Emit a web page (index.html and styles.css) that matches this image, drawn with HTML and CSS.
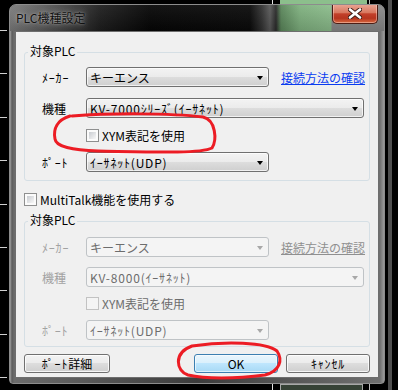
FILE: index.html
```html
<!DOCTYPE html>
<html lang="ja">
  <head>
    <meta charset="UTF-8" />
    <title>PLC機種設定</title>
    <link rel="stylesheet" href="styles.css">
  </head>
  <body>
    <div class="desk">
      <div class="ticks"></div>
      <div class="bgwin">
        <div class="bgpane"></div>
        <div class="bgfoot"></div>
      </div>
      <div class="rbar"></div>

      <div class="window">
        <div class="titlebar">
          <span class="title">PLC機種設定</span>
          <span class="close">
            <svg width="14" height="11" viewBox="0 0 14 11">
              <path d="M2 1.5 L12 9.5 M12 1.5 L2 9.5" stroke="#3a1a14" stroke-width="4.4" stroke-linecap="round" />
              <path d="M2 1.5 L12 9.5 M12 1.5 L2 9.5" stroke="#fff" stroke-width="2.6" stroke-linecap="round" />
            </svg>
          </span>
        </div>

        <div class="client">
          <div class="group">
            <span class="legend">対象PLC</span>
            <div class="row">
              <span class="lbl hw">ﾒｰｶｰ</span>
              <div class="combo short">キーエンス<i class="arrow"></i></div>
              <a class="link">接続方法の確認</a>
            </div>
            <div class="row gap">
              <span class="lbl">機種</span>
              <div class="combo long"><span class="hw">KV-7000ｼﾘｰｽﾞ(ｲｰｻﾈｯﾄ)</span><i class="arrow"></i></div>
            </div>
            <label class="check indent gap"><span class="box"></span>XYM表記を使用</label>
            <div class="row gap-s">
              <span class="lbl hw">ﾎﾟｰﾄ</span>
              <div class="combo short"><span class="hw">ｲｰｻﾈｯﾄ(UDP)</span><i class="arrow"></i></div>
            </div>
          </div>

          <label class="check multi"><span class="box"></span>MultiTalk機能を使用する</label>

          <div class="group second disabled">
            <span class="legend">対象PLC</span>
            <div class="row">
              <span class="lbl hw">ﾒｰｶｰ</span>
              <div class="combo short">キーエンス<i class="arrow"></i></div>
              <a class="link">接続方法の確認</a>
            </div>
            <div class="row gap-s">
              <span class="lbl">機種</span>
              <div class="combo long"><span class="hw">KV-8000(ｲｰｻﾈｯﾄ)</span><i class="arrow"></i></div>
            </div>
            <label class="check indent gap-s"><span class="box"></span>XYM表記を使用</label>
            <div class="row gap-s">
              <span class="lbl hw">ﾎﾟｰﾄ</span>
              <div class="combo short"><span class="hw">ｲｰｻﾈｯﾄ(UDP)</span><i class="arrow"></i></div>
            </div>
          </div>

          <div class="buttons">
            <button class="btn wide"><span class="hw">ﾎﾟｰﾄ</span>詳細</button>
            <span class="spacer"></span>
            <button class="btn default">OK</button>
            <button class="btn"><span class="hw">ｷｬﾝｾﾙ</span></button>
          </div>
        </div>
      </div>

      <!-- red marks drawn on the screenshot -->
      <svg class="marks" width="398" height="390" viewBox="0 0 398 390">
        <path d="M72 116 C110 113 170 113 203 117 C216 120 217 140 212 148 C200 154 150 152 98 151 C72 150 56 147 55 139 C53 129 57 120 70 116"
              fill="none" stroke="#ec1c24" stroke-width="3" stroke-linecap="round" />
        <path d="M192 346 C225 341 266 342 277 351 C283 360 280 371 265 375 C235 379 205 379 188 375 C176 371 173 353 192 346"
              fill="none" stroke="#ec1c24" stroke-width="3" stroke-linecap="round" />
      </svg>
    </div>
  </body>
</html>
```

FILE: styles.css
```css
* {
  box-sizing: border-box;
}
body {
  margin: 0;
  background: #000;
  font-family: "Noto Sans CJK JP", "Noto Sans", sans-serif;
  font-size: 12px;
  color: #000;
}
.desk {
  position: relative;
  width: 398px;
  height: 390px;
  overflow: hidden;
  background: #000;
}
/* half-width kana is narrow in Noto, widen it a little */
.hw {
  letter-spacing: 0.8px;
}

/* things behind the dialog */
.ticks {
  position: absolute;
  left: 0;
  top: 0;
  width: 7px;
  height: 390px;
  background: repeating-linear-gradient(
    to bottom,
    transparent 0,
    transparent 30px,
    #d0d0d0 30px,
    #d0d0d0 31px,
    transparent 31px,
    transparent 43.4px
  );
}
.bgwin {
  position: absolute;
  left: 272px;
  top: 0;
  width: 98px;
  height: 390px;
  border-left: 1px solid #e4e4e4;
  border-right: 1px solid #bdbdbd;
}
.bgpane {
  position: absolute;
  left: 7px;
  top: 0;
  width: 87px;
  height: 30px;
  background: #8cbf8c;
}
.bgfoot {
  position: absolute;
  left: 7px;
  top: 384px;
  width: 83px;
  height: 10px;
  border: 1px solid #a8a8a8;
  background: #364236;
}
.rbar {
  position: absolute;
  left: 388px;
  top: 0;
  width: 4px;
  height: 390px;
  background: #4e4e4e;
}

/* dialog window */
.window {
  position: absolute;
  left: 9px;
  top: 4px;
  width: 376px;
  height: 380px;
  border: 1px solid #8c8c8c;
  border-radius: 7px 7px 4px 4px;
  background: linear-gradient(
    to right,
    #a0a0a0 0,
    #5c5c5c 2px,
    #6c6c6c 4px,
    #3c3c3c 50%,
    #707070 calc(100% - 4px),
    #9a9a9a 100%
  );
  overflow: hidden;
}
.titlebar {
  display: flex;
  align-items: flex-start;
  height: 26px;
  background: linear-gradient(to bottom, rgba(255, 255, 255, 0.06), rgba(0, 0, 0, 0.15)),
    linear-gradient(
      to right,
      #7c7c7c 0,
      #5e5e5e 30px,
      #1e1e1e 90px,
      #060606 140px,
      #0a0a0a 240px,
      #333 252px,
      #5a5a5a 260px,
      #2a2a2a 266px,
      #5b875b 271px,
      #7fb17f 290px,
      #8cbd8c 321px,
      #8a8a8a 322px
    );
}
.title {
  padding: 5px 0 0 6px;
  line-height: 16px;
  color: #111;
  text-shadow: 0 0 6px rgba(255, 255, 255, 0.55), 0 0 2px rgba(255, 255, 255, 0.4);
}
.close {
  display: flex;
  align-items: center;
  justify-content: center;
  margin: -1px 6px 0 auto;
  width: 46px;
  height: 20px;
  border: 1px solid #4c1d14;
  border-top: none;
  border-radius: 0 0 5px 5px;
  background: linear-gradient(#eaa797 0%, #d8785f 45%, #c2402a 52%, #b6351f 75%, #d8693f 100%);
  box-shadow: inset 0 0 0 1px rgba(255, 220, 210, 0.45);
}

.client {
  display: flex;
  flex-direction: column;
  height: 347px;
  margin: 0 5px;
  padding: 0 8px;
  border: 1px solid #6e6e6e;
  background: #f0f0f0;
}

/* group boxes */
.group {
  position: relative;
  display: flex;
  flex-direction: column;
  margin-top: 20px;
  padding: 14px 0 8px 17px;
  border: 1px solid #d5dfe5;
  border-radius: 3px;
}
.group.second {
  margin-top: 15px;
  padding: 15px 0 6px 17px;
}
.legend {
  position: absolute;
  top: -9px;
  left: 3px;
  padding: 0 2px;
  line-height: 14px;
  background: #f0f0f0;
}
.row {
  display: flex;
  align-items: center;
  height: 20px;
}
.gap {
  margin-top: 11px;
}
.gap-s {
  margin-top: 10px;
}
.lbl {
  width: 44px;
  white-space: nowrap;
}
.combo {
  display: flex;
  align-items: center;
  height: 20px;
  padding-left: 3px;
  border: 1px solid #707070;
  border-radius: 3px;
  background: linear-gradient(#f3f3f3 0%, #ebebeb 50%, #dddddd 50%, #cfcfcf 100%);
  box-shadow: inset 0 0 0 1px rgba(255, 255, 255, 0.7);
  white-space: nowrap;
}
.combo.short {
  width: 183px;
}
.combo.long {
  width: 278px;
}
.arrow {
  margin: 1px 5px 0 auto;
  border-left: 3.5px solid transparent;
  border-right: 3.5px solid transparent;
  border-top: 4px solid #000;
}
.link {
  margin-left: 12px;
  color: #0a3cf0;
  text-decoration: underline;
  white-space: nowrap;
}

/* check boxes */
.check {
  display: flex;
  align-items: center;
  gap: 3px;
  height: 13px;
  line-height: 13px;
  white-space: nowrap;
}
.check.indent {
  padding-left: 44px;
}
.check.multi {
  margin-top: 12px;
}
.box {
  width: 13px;
  height: 13px;
  padding: 2px;
  border: 1px solid #8e8f8f;
  background: linear-gradient(135deg, #c9ccd1, #f7f7f7) content-box, #fbfbfb;
}

/* disabled group */
.disabled .lbl {
  color: #a2a2a2;
}
.disabled .combo {
  border-color: #bfc3c6;
  background: #f4f4f4;
  box-shadow: none;
  color: #6d6d6d;
}
.disabled .arrow {
  border-top-color: #a8a8a8;
}
.disabled .link {
  color: #8f8f8f;
}
.disabled .check {
  color: #6d6d6d;
}
.disabled .box {
  border-color: #c2c2c2;
  background: #f4f4f4;
}

/* bottom buttons */
.buttons {
  display: flex;
  gap: 8px;
  margin-top: 7px;
}
.spacer {
  flex: 1;
}
.btn {
  width: 84px;
  height: 19px;
  padding: 0;
  border: 1px solid #707070;
  border-radius: 3px;
  background: linear-gradient(#f3f3f3 0%, #ebebeb 50%, #dddddd 50%, #cfcfcf 100%);
  box-shadow: inset 0 0 0 1px rgba(255, 255, 255, 0.8);
  font-family: inherit;
  font-size: 12px;
  line-height: 17px;
  color: #000;
}
.btn.wide {
  width: 86px;
}
.btn.default {
  border-color: #3c7fb1;
  background: linear-gradient(#eaf6fd 0%, #d9f0fc 50%, #bee6fd 50%, #a7d9f5 100%);
  box-shadow: inset 0 0 0 1px rgba(255, 255, 255, 0.6);
}

.marks {
  position: absolute;
  left: 0;
  top: 0;
  pointer-events: none;
}
```
